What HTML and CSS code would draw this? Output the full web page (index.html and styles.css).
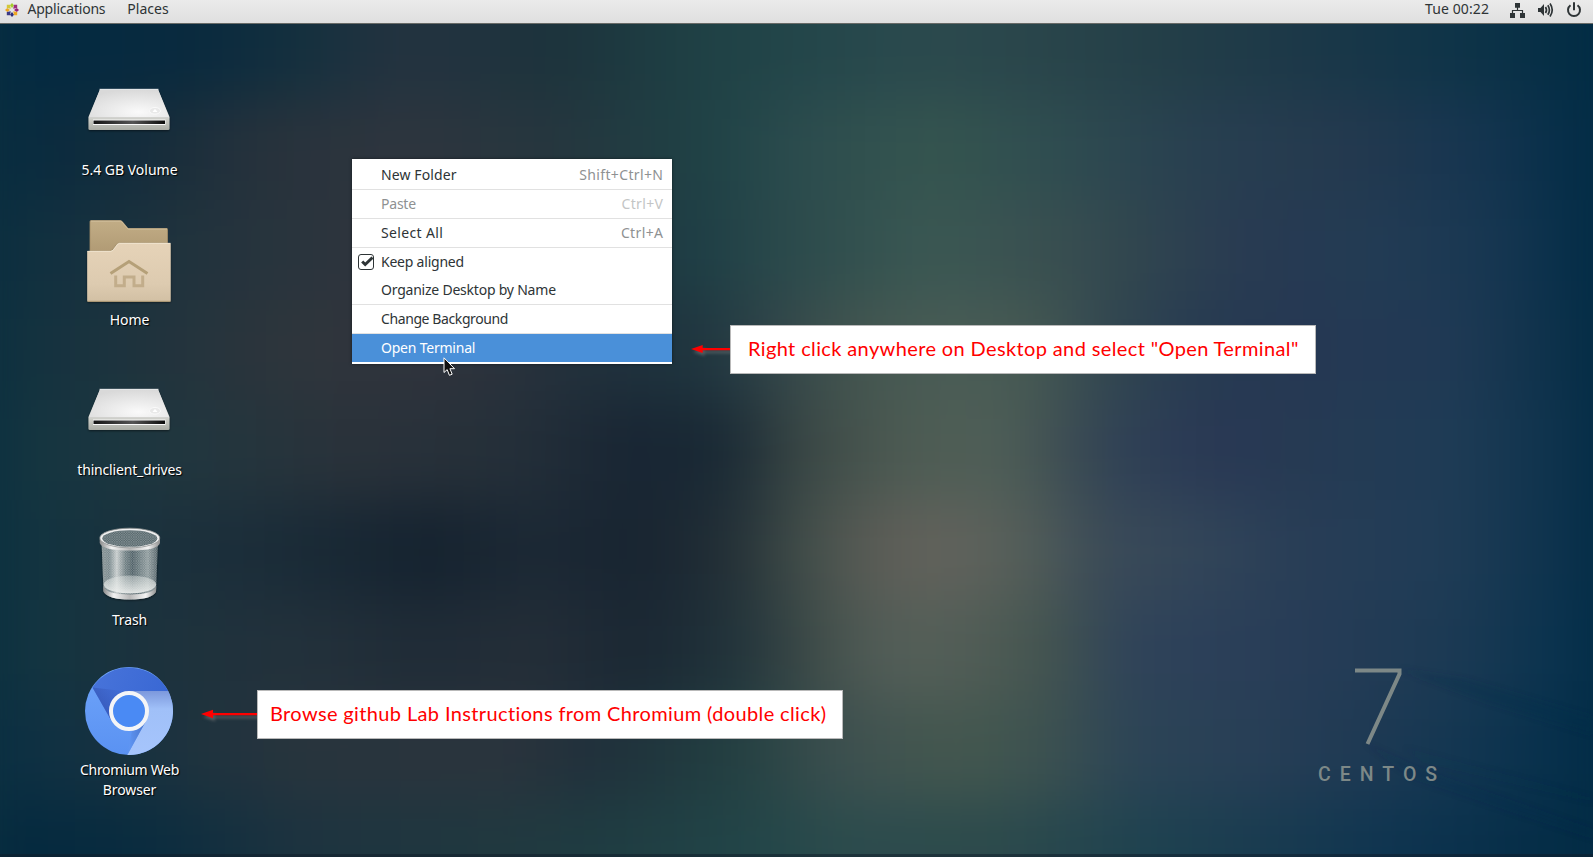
FILE: index.html
```html
<!DOCTYPE html>
<html lang="en">
<head>
<meta charset="utf-8">
<title>Desktop</title>
<link rel="stylesheet" href="styles.css">
</head>
<body>
<div class="screen">
  <div class="wallpaper">
    <div class="glow">
      <div class="band b0"></div><div class="band b1"></div><div class="band b2"></div>
      <div class="band b3"></div><div class="band b4"></div><div class="band b5"></div>
      <div class="band b6"></div><div class="band b7"></div><div class="band b8"></div>
    </div>
    <svg class="streaks" width="240" height="200" viewBox="0 0 240 200">
      <defs><filter id="soft"><feGaussianBlur stdDeviation="3"/></filter></defs>
      <g fill="#0f2a48" filter="url(#soft)">
        <path d="M45 12 L110 22 L240 60 V78 L130 44 Z" opacity=".3"/>
        <path d="M10 85 L70 112 L240 172 V182 L60 122 Z" opacity=".22"/>
        <path d="M50 90 L240 140 V146 L70 106 Z" opacity=".12"/>
      </g>
    </svg>
  </div>

  <header class="topbar">
    <div class="bar-group">
      <svg class="distro" width="14" height="14" viewBox="0 0 14 14">
        <path d="M7 0 9 2.200 7 5 5 2.200Z" fill="#a4cc2c"/><path d="M14 7 11.800 9 9 7 11.800 5Z" fill="#932279"/>
        <path d="M7 14 5 11.800 7 9 9 11.800Z" fill="#2f3080"/><path d="M0 7 2.200 5 5 7 2.200 9Z" fill="#efa724"/>
        <path d="M1.800 1.800H5L5.800 5.800 1.800 5Z" fill="#d2c73a"/><path d="M9 1.800h3.200V5L8.200 5.800Z" fill="#9a3080"/>
        <path d="M12.200 9v3.200H9L8.200 8.200Z" fill="#efa724"/><path d="M5 12.200H1.800V9l4-.8Z" fill="#3d3a85"/>
      </svg>
      <span class="m-apps">Applications</span>
      <span class="m-places">Places</span>
    </div>
    <div class="bar-group">
      <span class="clock">Tue 00:22</span>
      <svg class="tray" width="74" height="18" viewBox="0 0 74 18" fill="#2e3436">
        <path d="M5 2h5v4.700H5zM0 12h5v5H0zM10 12h5v5h-5z"/>
        <path d="M7.500 6v3M2.500 12V9.500h10V12" fill="none" stroke="#2e3436" stroke-width="1.200"/>
        <path d="M28 7h2.500l3.500-4v12l-3.500-4H28z"/>
        <path d="M35.500 6q2 3 0 6M37.800 4.200q3.200 4.800 0 9.600M40 2.500q4.500 6.500 0 13" fill="none" stroke="#2e3436" stroke-width="1.700"/>
        <path d="M60.500 4.200a6 6 0 1 0 7 0" fill="none" stroke="#2e3436" stroke-width="2"/>
        <path d="M63 1.300h2v8h-2z"/>
      </svg>
    </div>
  </header>

  <main class="icons">
    <div class="icon">
      <svg width="96" height="96" viewBox="0 0 96 96">
        <defs>
          <radialGradient id="lid" cx=".62" cy=".8" r=".8"><stop offset="0" stop-color="#fafafa"/><stop offset="1" stop-color="#d9d9d9"/></radialGradient>
          <linearGradient id="front" x2="0" y2="1"><stop offset="0" stop-color="#f4f4f2"/><stop offset=".65" stop-color="#d8d9d3"/><stop offset="1" stop-color="#a9aba4"/></linearGradient>
          <linearGradient id="slot"><stop offset="0" stop-color="#151515"/><stop offset=".55" stop-color="#555"/><stop offset="1" stop-color="#0c0c0c"/></linearGradient>
          <filter id="drop" x="-20%" y="-20%" width="140%" height="150%"><feDropShadow dx="0" dy="1" stdDeviation="1.200" flood-opacity=".5"/></filter>
          <g id="drive">
            <path d="M19 26.500H77L88.500 54V65.500Q88.500 67 87 67H9Q7.500 67 7.500 65.500V54Z" fill="url(#front)" filter="url(#drop)"/>
            <path d="M19 26.500H77L88.200 54.500H7.800Z" fill="url(#lid)"/>
            <path d="M18.500 26.300H77.500" stroke="#fff" stroke-width=".8"/>
            <path d="M8.500 54.700H87.500" stroke="#c9c9c6" stroke-width=".8"/>
            <path d="M12 56.500H84.500V62H12z" fill="#fafafa"/><path d="M12.500 57.500H84V61H12.500z" fill="url(#slot)"/>
            <ellipse cx="74" cy="47.800" rx="5.500" ry="3.300" fill="#e9e9e9" stroke="#fafafa"/><path d="M71.500 49 74 45.800l2.500 3.200z" fill="#fff"/>
          </g>
        </defs>
        <use href="#drive"/>
      </svg>
      <span class="t-vol">5.4 GB Volume</span>
    </div>
    <div class="icon">
      <svg width="96" height="96" viewBox="0 0 96 96">
        <defs>
          <linearGradient id="fb" x2="0" y2="1"><stop offset="0" stop-color="#c2ad86"/><stop offset="1" stop-color="#b09a74"/></linearGradient>
          <linearGradient id="ff" x2="0" y2="1"><stop offset="0" stop-color="#e6d3b8"/><stop offset=".7" stop-color="#ddcbb0"/><stop offset="1" stop-color="#d2c0a4"/></linearGradient>
        </defs>
        <path d="M9 39V8.500Q9 7.500 10 7.500H39.500L41 8.200 47 15.500H86Q86.500 15.500 86.500 16.500V40Z" fill="url(#fb)" stroke="#a38d68" stroke-width=".8"/>
        <path d="M10 8.100H39.500L41 9 47 16H86" fill="none" stroke="#d8c6a4" stroke-width=".8"/>
        <path d="M6.200 38H30L32 37 36.500 31 38.500 30H89Q89.700 30 89.700 31V87.500Q89.700 88.500 88.700 88.500H7.200Q6.200 88.500 6.200 87.500Z" fill="url(#ff)" filter="url(#drop)"/>
        <path d="M6.500 38.300H30L32 37.300 36.500 31.300 38.500 30.300H89.500" fill="none" stroke="#f3e8d6" stroke-width=".8"/>
        <path d="M6.500 88.300H89.500" stroke="#b39d76" stroke-width="1"/>
        <path d="M29.500 60.500 48 48.500 66.500 60.500" fill="none" stroke="#b5a078" stroke-width="3"/>
        <path d="M34.700 62.500V72.800H43.300V64H53V72.800H61.700V62.500" fill="none" stroke="#c2ad8b" stroke-width="3"/>
      </svg>
      <span class="t-home">Home</span>
    </div>
    <div class="icon">
      <svg width="96" height="96" viewBox="0 0 96 96"><use href="#drive"/></svg>
      <span class="t-thin">thinclient_drives</span>
    </div>
    <div class="icon">
      <svg width="96" height="96" viewBox="0 0 96 96">
        <defs>
          <pattern id="mesh" width="2.400" height="2.400" patternUnits="userSpaceOnUse"><path d="M0 0 2.400 2.400M2.400 0 0 2.400" stroke="#fff" stroke-width=".5" opacity=".35"/></pattern>
          <linearGradient id="can"><stop offset="0" stop-color="#7d8a8c"/><stop offset=".14" stop-color="#76868a"/><stop offset=".27" stop-color="#c3c9c9"/><stop offset=".42" stop-color="#6c7c80"/><stop offset=".55" stop-color="#4b5d63"/><stop offset=".82" stop-color="#8c999b"/><stop offset="1" stop-color="#4c5c62"/></linearGradient>
          <linearGradient id="rim"><stop offset="0" stop-color="#8b8b8b"/><stop offset=".2" stop-color="#f2f2f2"/><stop offset=".5" stop-color="#b8b8b8"/><stop offset=".8" stop-color="#f4f4f4"/><stop offset="1" stop-color="#8f8f8f"/></linearGradient>
          <linearGradient id="base" x2="0" y2="1"><stop offset="0" stop-color="#dfe4e2" stop-opacity=".45"/><stop offset="1" stop-color="#f0f2f0" stop-opacity=".9"/></linearGradient>
        </defs>
        <g filter="url(#drop)">
          <path d="M20.500 27 22.500 78Q26 86.500 49 86.500T75 78L77 27Z" fill="url(#can)"/>
        </g>
        <path d="M20.500 27 22.500 78Q26 86.500 49 86.500T75 78L77 27Z" fill="url(#mesh)"/>
        <ellipse cx="49" cy="71.500" rx="26.200" ry="9" fill="url(#base)"/>
        <path d="M22.300 73Q25 81.500 49 81.500T75.300 73L75 79Q70 86.500 49 86.500T22.500 79Z" fill="url(#rim)"/>
        <path d="M18.700 26V30Q21 37.500 49 37.500T79 30V26Z" fill="url(#rim)"/>
        <ellipse cx="48.800" cy="25" rx="30" ry="9.800" fill="#f0f0f0" stroke="#8d9090" stroke-width=".8"/>
        <ellipse cx="48.800" cy="25.500" rx="27.500" ry="8.300" fill="#56676c"/><ellipse cx="48.800" cy="25.500" rx="27.500" ry="8.300" fill="url(#mesh)"/>
      </svg>
      <span class="t-trash">Trash</span>
    </div>
    <div class="icon">
      <svg width="96" height="96" viewBox="0 0 96 96">
        <defs>
          <linearGradient id="c1" x2="1" y2=".3"><stop offset="0" stop-color="#4874da"/><stop offset="1" stop-color="#3a68d4"/></linearGradient>
          <linearGradient id="c2" x2="0" y2="1"><stop offset="0" stop-color="#6fa4fa"/><stop offset="1" stop-color="#5a92f2"/></linearGradient>
          <linearGradient id="c3" x2="0" y2="1"><stop offset="0" stop-color="#7c98dc"/><stop offset=".28" stop-color="#a0c0f8"/><stop offset="1" stop-color="#a6c5fc"/></linearGradient>
          <linearGradient id="c4" x1="1" y1="0" x2=".3" y2=".6"><stop offset="0" stop-color="#3556b8" stop-opacity="0"/><stop offset="1" stop-color="#3454b4"/></linearGradient>
          <linearGradient id="c5" x1="1" x2="0" y2=".3"><stop offset="0" stop-color="#4168bd"/><stop offset="1" stop-color="#5f95f2"/></linearGradient>
        </defs>
        <circle cx="48" cy="48" r="44" fill="url(#c2)"/>
        <path d="M48 28H87.200A44 44 0 0 1 46.300 92L65 58Z" fill="url(#c3)"/>
        <path d="M11.500 24.500A44 44 0 0 1 87.200 28H48L30 57Z" fill="url(#c1)"/>
        <path d="M11.500 24.500 30 57 42 28Z" fill="url(#c4)" opacity=".7"/>
        <path d="M46.300 92 65 58 51 67Z" fill="url(#c5)" opacity=".8"/>
        <circle cx="48" cy="48" r="18" fill="#4a8af4" stroke="#f4f5f7" stroke-width="4"/>
      </svg>
      <span class="t-chrom">Chromium Web<br><span class="t-browser">Browser</span></span>
    </div>
  </main>

  <div class="menu">
    <div class="item"><span class="w-new">New Folder</span><kbd>Shift+Ctrl+N</kbd></div>
    <hr>
    <div class="item off"><span class="w-keep">Paste</span><kbd>Ctrl+V</kbd></div>
    <hr>
    <div class="item"><span class="w-all">Select All</span><kbd>Ctrl+A</kbd></div>
    <hr>
    <div class="item">
      <svg class="check" width="16" height="16" viewBox="0 0 16 16"><rect x=".5" y=".5" width="15" height="15" rx="2.500" fill="#fff" stroke="#2e3436"/><path d="M4.200 7.500 7.200 10.500 14.500 3.500" fill="none" stroke="#2e3436" stroke-width="3"/></svg>
      <span class="w-keep">Keep aligned</span>
    </div>
    <div class="item"><span class="w-keep">Organize Desktop by Name</span></div>
    <hr>
    <div class="item"><span class="w-bg">Change Background</span></div>
    <hr>
    <div class="item active"><span class="w-keep">Open Terminal</span></div>
  </div>

  <svg class="cursor" width="13" height="20" viewBox="0 0 13 20"><path d="M1 .8V15.500L4.200 12.600 6.400 18.300 9.200 17.200 6.900 11.700H11.500Z" fill="#111" stroke="#fff" stroke-width="1"/></svg>

  <div class="note note-terminal">
    <svg width="40" height="20" viewBox="0 0 40 20"><g class="arrow"><path d="M11 9H40V11.300H11z"/><path d="M0 10 12 5.800V14.200z"/></g></svg>
    <p class="p1">Right click anywhere on Desktop and select "Open Terminal"</p>
  </div>
  <div class="note note-browser">
    <svg width="56" height="20" viewBox="0 0 56 20"><g class="arrow"><path d="M11 9H56V11.300H11z"/><path d="M0 10 12 5.800V14.200z"/></g></svg>
    <p class="p2">Browse github Lab Instructions from Chromium (double click)</p>
  </div>

  <div class="brand">
    <svg width="50" height="80" viewBox="0 0 50 80"><path d="M2 4.500H46.500V8L14.500 78" fill="none" stroke="#7d8887" stroke-width="4"/></svg>
    <span>CENTOS</span>
  </div>
</div>
</body>
</html>
```

FILE: styles.css
```css
* { box-sizing: border-box; }
body { margin: 0; font-family: "Noto Sans", sans-serif; font-size: 14px; color: #2e3436; }
.screen { position: relative; width: 1593px; height: 857px; overflow: hidden; background: #12303f; }

.wallpaper { position: absolute; inset: 0; overflow: hidden; }
.wallpaper::after { content: ""; position: absolute; left: 0; right: 0; bottom: 0; height: 3px; background: #101c2a; opacity: .5; }
.glow { position: absolute; inset: -100px -40px; padding: 0 40px; display: flex; flex-direction: column; filter: blur(28px); background: linear-gradient(90deg, #0a2f40 50%, #022c46 50%); }
.band { flex: 0 0 100px; }
.b0 { flex-basis: 200px; background: linear-gradient(90deg, #012a42 0, #0a2a3e 200px, #14303e 300px, #243340 400px, #1c333c 560px, #1f4145 700px, #23464a 800px, #2b4a4e 920px, #2a464b 1020px, #243f48 1150px, #1c3848 1300px, #0f3448 1450px, #022c44 1593px); }
.b1 { background: linear-gradient(90deg, #062b40 0, #152c3b 150px, #27323c 260px, #2e353e 400px, #25363e 560px, #1e4145 700px, #2c4c4e 800px, #35554f 930px, #2f4d50 1050px, #283f50 1200px, #24394f 1350px, #153550 1480px, #022c46 1593px); }
.b2 { background: linear-gradient(90deg, #0d2f40 0, #22333d 200px, #31353d 400px, #2b353d 550px, #1c3c44 680px, #2a494b 780px, #3b5853 930px, #394f50 1050px, #2f444f 1150px, #283a52 1250px, #213b54 1400px, #163651 1500px, #022c46 1593px); }
.b3 { background: linear-gradient(90deg, #103240 0, #20333d 150px, #2f353c 300px, #2f333c 450px, #20303c 600px, #1e353f 700px, #33464a 780px, #43554f 850px, #4a5d56 950px, #455852 1040px, #334850 1100px, #263a51 1200px, #263853 1300px, #203a55 1450px, #0a3049 1570px, #052d47 1593px); }
.b4 { background: linear-gradient(90deg, #123541 0, #22363e 200px, #2a323a 350px, #242f39 520px, #182533 630px, #1a2a35 730px, #3a4745 800px, #4d5b53 900px, #4f5f57 1000px, #3c4c52 1070px, #2f4156 1120px, #293854 1220px, #263a53 1300px, #1f3c56 1450px, #082f49 1593px); }
.b5 { background: linear-gradient(90deg, #103541 0, #1b313d 150px, #1b2d39 260px, #15222f 430px, #1c2935 530px, #182431 640px, #222f36 730px, #44504b 810px, #5d5d57 880px, #62635c 950px, #505c58 1040px, #3c4b57 1090px, #324559 1200px, #283d56 1300px, #1f3c56 1450px, #072f4a 1593px); }
.b6 { background: linear-gradient(90deg, #103542 0, #1c323d 150px, #23313b 300px, #1f2b36 430px, #242e38 530px, #1a2733 640px, #22343b 740px, #414e4a 820px, #535e58 880px, #535e57 960px, #43544f 1050px, #304459 1120px, #2c4059 1200px, #263c56 1320px, #1c3a54 1450px, #04304c 1593px); }
.b7 { background: linear-gradient(90deg, #0b3044 0, #1a323f 150px, #28343d 300px, #2b343d 500px, #1f303b 600px, #223f41 730px, #3f5150 850px, #44584f 960px, #3c5150 1050px, #2c4456 1130px, #283f56 1250px, #203a54 1350px, #143752 1450px, #022d49 1593px); }
.b8 { flex-basis: 200px; background: linear-gradient(90deg, #03293f 0, #0a2c3f 150px, #1d333f 300px, #20383f 500px, #1f3d42 620px, #224548 750px, #2c4c4d 850px, #2c4a4c 1000px, #1e4250 1150px, #1a3c50 1250px, #0e3450 1400px, #022b44 1593px); }
.streaks { position: absolute; left: 1353px; top: 657px; opacity: .7; }

.topbar { position: relative; display: flex; justify-content: space-between; height: 24px; background: linear-gradient(#ebebeb, #dfdfdf); border-bottom: 1px solid #686a67; line-height: 18px; }
.bar-group { display: flex; height: 18px; align-items: center; }
.distro { margin: 1px 8.500px 0 5px; }
.m-apps { letter-spacing: -.22px; }
.m-places { margin-left: 22px; }
.clock { letter-spacing: .1px; }
.tray { margin: 1px 9px 0 21px; }

.icons { position: relative; display: flex; flex-direction: column; width: 130px; margin: 39px 0 0 64px; }
.icon { height: 150px; display: flex; flex-direction: column; align-items: center; color: #fff; text-align: center; line-height: 20px; text-shadow: 1px 1px 1px #000; }
.icon > span { margin: 1px 0 0 1px; white-space: nowrap; }
.icon svg { flex: none; }
.t-thin { letter-spacing: -.18px; }
.t-home, .t-trash, .icon .t-browser { letter-spacing: -.12px; }
.t-chrom { letter-spacing: -.32px; }

.menu { position: absolute; left: 352px; top: 159px; width: 320px; height: 205px; padding: 2px 0; background: #fff; box-shadow: 0 0 3px rgba(0,0,0,.5); }
.menu hr { margin: 0; border: 0; height: 1px; background: #e1e1e1; }
.item { position: relative; height: 28px; padding: 0 9px 0 29px; display: flex; justify-content: space-between; align-items: center; line-height: 28px; white-space: nowrap; }
.item kbd { font: inherit; color: #8e9192; letter-spacing: .37px; margin-right: -.37px; }
.off { color: #8e9192; }
.off kbd { color: #c3c5c5; }
.w-new { letter-spacing: .1px; }
.w-all { letter-spacing: .35px; }
.w-keep { letter-spacing: -.22px; }
.w-bg { letter-spacing: -.4px; }
.check { position: absolute; left: 6px; top: 6px; }
.active { background: #4a90d9; color: #fff; }
.cursor { position: absolute; left: 443px; top: 357px; }

.note { position: absolute; display: flex; align-items: flex-start; }
.note svg { margin-top: 14px; overflow: visible; }
.arrow { fill: #f00; filter: drop-shadow(2px 3px 1.500px rgba(120,120,120,.6)); }
.note p { margin: 0; width: 586px; height: 49px; background: #fff; border: 1px solid #b9b9b9; font-family: Lato, sans-serif; font-size: 20px; line-height: 44px; color: #f00; white-space: nowrap; }
.note-terminal { left: 691px; top: 325px; }
.note-terminal svg { width: 39px; }
.note-browser { left: 201px; top: 690px; }
.note .p1 { padding-left: 17px; letter-spacing: .375px; }
.note .p2 { padding-left: 12px; letter-spacing: .37px; }

.brand { position: absolute; left: 1318px; top: 666px; width: 140px; display: flex; flex-direction: column; }
.brand svg { margin-left: 35px; }
.brand span { margin-top: 17px; font: 500 19.500px/24px Roboto, sans-serif; letter-spacing: 9px; color: #7d8887; }
```
